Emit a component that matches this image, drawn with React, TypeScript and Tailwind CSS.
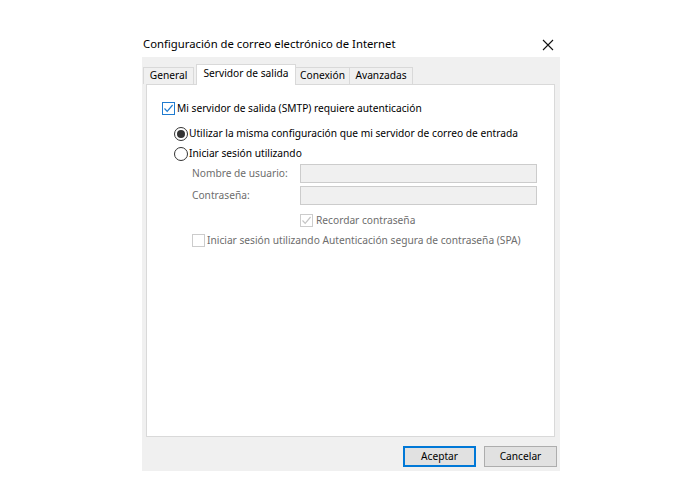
import React from 'react'

const font = { fontFamily: '"Noto Sans", "Open Sans", sans-serif' }

function CheckBox({ disabled = false, checked = false }: { disabled?: boolean; checked?: boolean }) {
  const border = disabled ? 'border-[#cccccc]' : 'border-[#1f7bd0]'
  return (
    <span className={`w-[13px] h-[13px] border ${border} bg-white flex items-center justify-center shrink-0`}>
      {checked && (
        <svg width="11" height="11" viewBox="0 0 11 11">
          <path d="M1.5 5.5 L4.2 8.3 L9.6 2" fill="none" stroke={disabled ? '#c4c4c4' : '#1f7bd0'} strokeWidth="1.2" />
        </svg>
      )}
    </span>
  )
}

function Radio({ checked = false }: { checked?: boolean }) {
  return (
    <span className="w-[14px] h-[14px] rounded-full border border-[#333333] bg-white flex items-center justify-center shrink-0">
      {checked && <span className="w-[8px] h-[8px] rounded-full bg-[#333333]" />}
    </span>
  )
}

export default function App() {
  return (
    <div className="w-[700px] h-[500px] bg-white text-[10.2px] text-black" style={font}>
      <div className="ml-[142px] pt-[32px] w-[418px]">
        {/* Title */}
        <div className="h-[25px] flex items-center justify-between">
          <span className="ml-[1px] text-[11.3px]">Configuración de correo electrónico de Internet</span>
          <svg width="12" height="12" viewBox="0 0 12 12" className="mr-[6px]">
            <path d="M1 1 L11 11 M11 1 L1 11" stroke="#111" strokeWidth="1.1" />
          </svg>
        </div>

        {/* Body */}
        <div className="h-[414px] bg-[#f0f0f0] pt-[7px] flex flex-col">
          {/* Tabs */}
          <div className="flex items-end h-[20px] ml-[1px] relative z-10">
            <div className="w-[51px] h-[17px] border border-b-0 border-[#d9d9d9] bg-[#f0f0f0] flex items-center justify-center">General</div>
            <div className="w-[100px] h-[21px] ml-[2px] mb-[-1px] border border-b-0 border-[#d9d9d9] bg-white flex items-start justify-center pt-[1px]">Servidor de salida</div>
            <div className="w-[54px] h-[17px] border border-b-0 border-l-0 border-[#d9d9d9] bg-[#f0f0f0] flex items-center justify-center">Conexión</div>
            <div className="w-[63px] h-[17px] border border-b-0 border-l-0 border-[#d9d9d9] bg-[#f0f0f0] flex items-center justify-center">Avanzadas</div>
          </div>

          {/* Panel */}
          <div className="ml-[4px] w-[409px] h-[353px] border border-[#d9d9d9] bg-white pl-[15px] pt-[17px]">
            <div className="flex items-center gap-[2px] h-[13px]">
              <CheckBox checked />
              <span>Mi servidor de salida (SMTP) requiere autenticación</span>
            </div>

            <div className="ml-[12px] mt-[12px] flex flex-col gap-[6px]">
              <div className="flex items-center gap-[1px] h-[14px]">
                <Radio checked />
                <span>Utilizar la misma configuración que mi servidor de correo de entrada</span>
              </div>
              <div className="flex items-center gap-[1px] h-[14px]">
                <Radio />
                <span>Iniciar sesión utilizando</span>
              </div>
            </div>

            <div className="ml-[30px] mt-[3px] text-[#6d6d6d]">
              <div className="grid grid-cols-[108px_237px] gap-y-[3px] items-center">
                <span>Nombre de usuario:</span>
                <div className="h-[19px] border border-[#cccccc] bg-[#f0f0f0]" />
                <span>Contraseña:</span>
                <div className="h-[19px] border border-[#cccccc] bg-[#f0f0f0]" />
              </div>
              <div className="ml-[108px] mt-[9px] flex items-center gap-[3px] h-[13px]">
                <CheckBox checked disabled />
                <span>Recordar contraseña</span>
              </div>
              <div className="mt-[7px] flex items-center gap-[2px] h-[13px]">
                <CheckBox disabled />
                <span>Iniciar sesión utilizando Autenticación segura de contraseña (SPA)</span>
              </div>
            </div>
          </div>

          {/* Buttons */}
          <div className="flex justify-end gap-[8px] mt-[9px] mr-[3px]">
            <button className="w-[73px] h-[21px] border-2 border-[#0078d7] bg-[#e1e1e1]">Aceptar</button>
            <button className="w-[73px] h-[21px] border border-[#adadad] bg-[#e1e1e1]">Cancelar</button>
          </div>
        </div>
      </div>
    </div>
  )
}
